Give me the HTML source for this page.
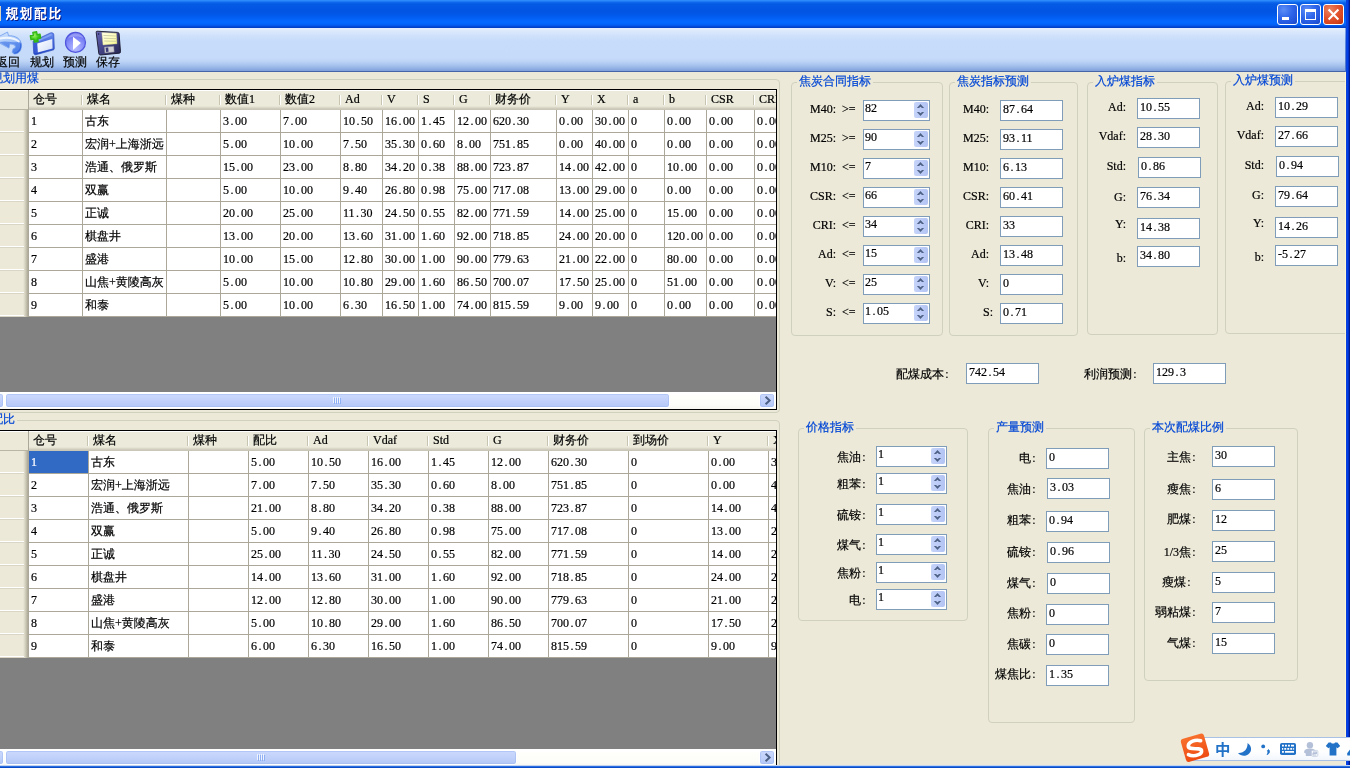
<!DOCTYPE html>
<html lang="zh-CN"><head><meta charset="utf-8"><title>规划配比</title>
<style>
*{box-sizing:border-box;margin:0;padding:0}
html,body{width:1350px;height:768px;overflow:hidden;background:#ece9d8}
body{position:relative;will-change:transform;font-family:"Liberation Serif","WenQuanYi Zen Hei","Noto Sans CJK SC",serif;font-size:12px;line-height:12px;color:#000}
.a{position:absolute}
.t{position:absolute;white-space:nowrap;height:12px;line-height:12px;-webkit-text-stroke:0.2px currentColor}
.r{text-align:right}
.p{display:inline-block;width:6px;text-align:center}
.bl{color:#0046d5;background:#ece9d8}
/* frame */
#title{left:0;top:0;width:1350px;height:28px;background:linear-gradient(to bottom,#3391fc 0,#2683f8 1px,#0d66ec 2.5px,#045ae5 4px,#0254e2 11px,#0259ea 15px,#0463f8 19px,#0468ff 22px,#0365fb 24px,#0355e6 26px,#0140c8 27px,#0140c8 28px)}
#ttxt{left:5.5px;top:7px;-webkit-text-stroke:0;font-family:"Liberation Sans","Noto Sans CJK SC",sans-serif;font-weight:bold;font-size:12.6px;line-height:14px;height:14px;color:#fff;text-shadow:1px 1px 0 #0a1883,0.4px 0 0 #fff;letter-spacing:1.7px}
#rb{left:1346px;top:0;width:4px;height:768px;background:linear-gradient(to right,#0c40d8 0,#0c40d8 1px,#0041ea 1px,#0041ea 2px,#0030c8 2px,#0030c8 3px,#001a90 3px,#001a90 4px)}
#bb{left:0;top:765px;width:1350px;height:3px;background:linear-gradient(to bottom,#c4d4f0 0,#c4d4f0 1px,#2a6fe2 1px,#2a6fe2 2px,#0c4cc6 2px,#0c4cc6 3px)}
.cb{top:4px;width:21px;height:21px;border:1px solid #fff;border-radius:3px;background:radial-gradient(circle at 30% 25%,#5c8df6 0,#2f66ea 45%,#2356dc 75%,#1a46c4 100%);overflow:hidden}
.cb.x{background:radial-gradient(circle at 30% 25%,#ec8460 0,#e2542f 45%,#d5411b 75%,#b9300c 100%)}
#tool{left:0;top:28px;width:1345px;height:44px;background:linear-gradient(to bottom,#e7f0fd 0,#dce9fc 3px,#cfe1fb 8px,#c7dcfa 13px,#c6dbf9 30px,#bfd5f6 33px,#a9c4ee 37px,#8eadE2 41px,#7f9fda 43px,#4565a8 43px,#4565a8 44px)}
.tl{top:56px}
/* group boxes */
.g{position:absolute;border:1px solid #d0d0bf;border-radius:4px}
/* text boxes */
.tb{position:absolute;height:21px;background:#fff;border:1px solid #7f9db9}
.sp{position:absolute;height:21px;background:#fff;border:1px solid #7f9db9}
.sb{position:absolute;right:1px;top:1px;width:14px;height:16px;border-radius:2px;background:linear-gradient(to right,#c6d4f9,#bccbf7 55%,#b3c4f3)}
/* grid */
.grid{position:absolute;overflow:hidden;background:#808080;border:1px solid #000;border-left:0}
.hd{position:absolute;top:0;height:20px;background:linear-gradient(to bottom,#fff 0,#fff 1px,#ebeadb 1px,#ebeadb 16px,#e3dfd0 17px,#d6d2c2 18px,#cbc7b8 19px,#cbc7b8 20px)}
.hs{position:absolute;top:5px;width:2px;height:10px;border-left:1px solid #c7c5b2;border-right:1px solid #fff}
.c{position:absolute;height:23px;background:#fff;border-right:1px solid #aca899;border-bottom:1px solid #aca899}
.c .t{top:6px;left:2px}
.hd .t{top:3px;left:4px}
.rh{position:absolute;left:0;width:29px;height:23px;background:linear-gradient(to right,#ece9d8 0,#ece9d8 23px,#e2dfce 24px,#d6d3c2 25px,#c9c6b4 26px,#bab7a5 27px,#aca899 28px,#aca899 29px)}
.rh i{position:absolute;left:0;top:21px;width:24px;height:2px;border-top:1px solid #fff;border-bottom:1px solid #d9d6c6}
.sel{background:#316ac5;color:#fff}
.hsb{position:absolute;left:0;height:17px;background:linear-gradient(to bottom,#fff 0,#fff 2px,#fefefb 4px,#fcfcf8 13px,#f8f7f1 17px)}
.th{position:absolute;top:1px;height:15px;border:1px solid #fff;border-radius:3px;background:linear-gradient(to bottom,#cbd9fc 0,#c3d3fb 5px,#bccdf8 9px,#b4c8f6 13px);box-shadow:inset 0 0 0 1px rgba(160,185,240,.55)}
</style></head>
<body>
<div id="title" class="a"></div>
<div class="a" style="left:0;top:6px;width:1px;height:15px;background:#d8d4c0"></div><div id="ttxt" class="t">规划配比</div>
<div class="a cb" style="left:1277px"><div class="a" style="left:4px;top:12px;width:7px;height:3px;background:#fff"></div></div><div class="a cb" style="left:1300px"><div class="a" style="left:4px;top:4px;width:11px;height:11px;border:1px solid #fff;border-top-width:3px"></div></div><div class="a cb x" style="left:1323px"><svg class="a" style="left:0;top:0" width="19" height="19" viewBox="0 0 19 19"><path d="M4.6 4.6 L14.4 14.4 M14.4 4.6 L4.6 14.4" stroke="#fff" stroke-width="2.1" stroke-linecap="butt" fill="none"/></svg></div>
<div id="tool" class="a"></div>
<svg class="a" style="left:-2px;top:29px" width="128" height="28" viewBox="-2 29 128 28">
<defs>
<linearGradient id="ga" x1="0" y1="0" x2="0.35" y2="1"><stop offset="0" stop-color="#d6e6fe"/><stop offset=".45" stop-color="#b4d0fa"/><stop offset=".8" stop-color="#86b0f5"/><stop offset="1" stop-color="#6a9af0"/></linearGradient>
<linearGradient id="gw" x1="0" y1="0" x2="1" y2="1"><stop offset="0" stop-color="#ffffff"/><stop offset="1" stop-color="#cfdcf8"/></linearGradient>
<linearGradient id="gf" x1="0" y1="0" x2="0" y2="1"><stop offset="0" stop-color="#6a8cf0"/><stop offset="1" stop-color="#2446c4"/></linearGradient>
<radialGradient id="gp" cx=".5" cy=".8" r=".8"><stop offset="0" stop-color="#b6bcff"/><stop offset=".45" stop-color="#9097fb"/><stop offset=".8" stop-color="#7178f2"/><stop offset="1" stop-color="#5a60ea"/></radialGradient>
<radialGradient id="gg" cx=".4" cy=".35" r=".7"><stop offset="0" stop-color="#9cf060"/><stop offset=".6" stop-color="#3fce1c"/><stop offset="1" stop-color="#28a80c"/></radialGradient>
<linearGradient id="gd" x1="0" y1="0" x2="1" y2="1"><stop offset="0" stop-color="#6a6ab6"/><stop offset=".4" stop-color="#4a4a92"/><stop offset="1" stop-color="#26264e"/></linearGradient>
<linearGradient id="gy" x1="0" y1="0" x2="1" y2="1"><stop offset="0" stop-color="#ffffe8"/><stop offset=".5" stop-color="#fdfdc0"/><stop offset="1" stop-color="#f8f88e"/></linearGradient>
</defs>
<!-- back arrow -->
<path d="M-7 39.6 L7.5 32.1 L8.6 35.7 C13.5 35.6 18.2 37.2 20.4 41 C22 44 21.6 49 19.8 51.4 C18.2 53.4 15.4 54.2 13.6 53.8 L12.2 52.3 C12.6 50.6 12.8 49.6 13.2 48.8 C15 48.2 15.8 47.2 15.2 46 C14.4 44.4 11.6 44 9.5 44 L9 48.1 Z" fill="url(#ga)" stroke="#6f9cee" stroke-width=".8" stroke-linejoin="round"/>
<path d="M-1 42 L8.9 47.6 L9.4 43.6 C12 43.4 15 44 15.8 46 C16.4 47.6 15 48.8 13.4 49.2 L12.6 52.2 C15 53.6 18 52.6 19.4 50.8 C21 48.6 21.4 44.6 20 41.6 C17 42.8 10 41.6 5 41.4 Z" fill="#3f74e6" fill-opacity=".62"/>
<path d="M-1 38.6 C5 37.4 13.4 37.2 18.8 41.6" fill="none" stroke="#ffffff" stroke-width="1.9" stroke-opacity=".8" stroke-linecap="round"/>
<path d="M20.7 43.4 C21.5 48.2 19.4 52.6 14.2 53.3" fill="none" stroke="#2f5fd8" stroke-width="1.2" stroke-opacity=".85"/>
<!-- new window -->
<path d="M33.1 41.2 L50.4 32.9 C52.6 32.3 53.7 33.3 53.8 34.8 L54.3 48.3 C54.3 49.3 53.9 49.8 52.9 50.1 L36 54.7 C34.6 54.9 33.8 54.2 33.7 53 Z" fill="url(#gf)" stroke="#2040b8" stroke-width=".6"/>
<path d="M37.3 43.4 L52.2 39.1 L52.6 48.6 L37.7 52.6 Z" fill="url(#gw)"/>
<path d="M34 41.6 L51.4 33.6 L51.8 35.4 L36.6 42.2 Z" fill="#86a6f6" fill-opacity=".85"/>
<path d="M33.9 42.6 L36.9 43 L37.4 52.6 L34.5 53.4 Z" fill="#3a5ad6"/>
<path d="M33.6 32 h3.8 v3 h3 v3.8 h-3 v3 h-3.8 v-3 h-3 v-3.8 h3 Z" fill="url(#gg)" stroke="#34b816" stroke-width="1.4" stroke-linejoin="round" transform="rotate(-9 35.5 36.9)"/>
<!-- play -->
<circle cx="75.5" cy="42.4" r="10" fill="url(#gp)" stroke="#4f55dc" stroke-width="1.2"/>
<path d="M68 38.5 C69.5 34.8 73 33.2 76 33.2 C79.6 33.2 82.6 35.2 83.8 38.4 C80 36 72 36 68 38.5 Z" fill="#ffffff" fill-opacity=".28"/>
<path d="M73 36.8 L80.9 43 L73 50 Z" fill="#ffffff"/>
<!-- floppy -->
<path d="M97 31.2 L117.6 32.4 C118.6 32.5 119 33 119.1 33.8 L120.5 51.6 C120.6 52.6 120.2 53.1 119.2 53.2 L100.6 55 C99.6 55.1 99 54.6 98.8 53.6 L96.2 32.4 C96.1 31.6 96.4 31.2 97 31.2 Z" fill="url(#gd)" stroke="#17172c" stroke-width=".9"/>
<path d="M101.8 32.4 L116.4 33.3 L117 43.8 L103 45 Z" fill="url(#gy)" stroke="#c8c888" stroke-width=".4"/>
<path d="M103.4 35.4 L115.8 36 M103.8 38.2 L116 38.7 M104.2 41 L116.2 41.3" stroke="#c4c4a0" stroke-width=".8" fill="none"/>
<path d="M104.2 47 L113.8 46.2 L114.2 52 L104.9 53 Z" fill="#d0d0d4" stroke="#77778c" stroke-width=".5"/>
<path d="M105.6 47.8 L108.2 47.6 L108.6 51.8 L106.1 52.1 Z" fill="#3c3c78"/>
<circle cx="98.6" cy="34" r=".8" fill="#1c1c44"/>
</svg>

<div class="t" style="left:-4px;top:56px;">返回</div><div class="t" style="left:30px;top:56px;">规划</div><div class="t" style="left:63px;top:56px;">预测</div><div class="t" style="left:96px;top:56px;">保存</div>
<div class="g" style="left:-20px;top:79px;width:800px;height:334px"></div><div class="t bl" style="left:-10px;top:72px;padding:0 2px 0 1px">规划用煤</div><div class="grid" style="left:0;top:89px;width:777px;height:321px"><div class="a" style="left:0;top:0;width:28px;height:20px;background:linear-gradient(to bottom,#fff 0,#fff 1px,#ece9d8 1px,#ece9d8 19px,#b9b6a4 19px,#b9b6a4 20px)"></div><div class="a" style="left:28px;top:0;width:1px;height:20px;background:#aca899"></div><div class="hd" style="left:29px;width:54px"><div class="t" style="left:4px;top:3px;">仓号</div><div class="hs" style="left:52px"></div></div><div class="hd" style="left:83px;width:84px"><div class="t" style="left:4px;top:3px;">煤名</div><div class="hs" style="left:82px"></div></div><div class="hd" style="left:167px;width:54px"><div class="t" style="left:4px;top:3px;">煤种</div><div class="hs" style="left:52px"></div></div><div class="hd" style="left:221px;width:60px"><div class="t" style="left:4px;top:3px;">数值1</div><div class="hs" style="left:58px"></div></div><div class="hd" style="left:281px;width:60px"><div class="t" style="left:4px;top:3px;">数值2</div><div class="hs" style="left:58px"></div></div><div class="hd" style="left:341px;width:42px"><div class="t" style="left:4px;top:3px;">Ad</div><div class="hs" style="left:40px"></div></div><div class="hd" style="left:383px;width:36px"><div class="t" style="left:4px;top:3px;">V</div><div class="hs" style="left:34px"></div></div><div class="hd" style="left:419px;width:36px"><div class="t" style="left:4px;top:3px;">S</div><div class="hs" style="left:34px"></div></div><div class="hd" style="left:455px;width:36px"><div class="t" style="left:4px;top:3px;">G</div><div class="hs" style="left:34px"></div></div><div class="hd" style="left:491px;width:66px"><div class="t" style="left:4px;top:3px;">财务价</div><div class="hs" style="left:64px"></div></div><div class="hd" style="left:557px;width:36px"><div class="t" style="left:4px;top:3px;">Y</div><div class="hs" style="left:34px"></div></div><div class="hd" style="left:593px;width:36px"><div class="t" style="left:4px;top:3px;">X</div><div class="hs" style="left:34px"></div></div><div class="hd" style="left:629px;width:36px"><div class="t" style="left:4px;top:3px;">a</div><div class="hs" style="left:34px"></div></div><div class="hd" style="left:665px;width:42px"><div class="t" style="left:4px;top:3px;">b</div><div class="hs" style="left:40px"></div></div><div class="hd" style="left:707px;width:48px"><div class="t" style="left:4px;top:3px;">CSR</div><div class="hs" style="left:46px"></div></div><div class="hd" style="left:755px;width:48px"><div class="t" style="left:4px;top:3px;">CRI</div><div class="hs" style="left:46px"></div></div><div class="rh" style="top:20px"><i></i></div><div class="c" style="left:29px;top:20px;width:54px"><div class="t" style="left:2px;top:5px;">1</div></div><div class="c" style="left:83px;top:20px;width:84px"><div class="t" style="left:2px;top:5px;">古东</div></div><div class="c" style="left:167px;top:20px;width:54px"></div><div class="c" style="left:221px;top:20px;width:60px"><div class="t" style="left:2px;top:5px;">3<span class="p">.</span>00</div></div><div class="c" style="left:281px;top:20px;width:60px"><div class="t" style="left:2px;top:5px;">7<span class="p">.</span>00</div></div><div class="c" style="left:341px;top:20px;width:42px"><div class="t" style="left:2px;top:5px;">10<span class="p">.</span>50</div></div><div class="c" style="left:383px;top:20px;width:36px"><div class="t" style="left:2px;top:5px;">16<span class="p">.</span>00</div></div><div class="c" style="left:419px;top:20px;width:36px"><div class="t" style="left:2px;top:5px;">1<span class="p">.</span>45</div></div><div class="c" style="left:455px;top:20px;width:36px"><div class="t" style="left:2px;top:5px;">12<span class="p">.</span>00</div></div><div class="c" style="left:491px;top:20px;width:66px"><div class="t" style="left:2px;top:5px;">620<span class="p">.</span>30</div></div><div class="c" style="left:557px;top:20px;width:36px"><div class="t" style="left:2px;top:5px;">0<span class="p">.</span>00</div></div><div class="c" style="left:593px;top:20px;width:36px"><div class="t" style="left:2px;top:5px;">30<span class="p">.</span>00</div></div><div class="c" style="left:629px;top:20px;width:36px"><div class="t" style="left:2px;top:5px;">0</div></div><div class="c" style="left:665px;top:20px;width:42px"><div class="t" style="left:2px;top:5px;">0<span class="p">.</span>00</div></div><div class="c" style="left:707px;top:20px;width:48px"><div class="t" style="left:2px;top:5px;">0<span class="p">.</span>00</div></div><div class="c" style="left:755px;top:20px;width:48px"><div class="t" style="left:2px;top:5px;">0<span class="p">.</span>00</div></div><div class="rh" style="top:43px"><i></i></div><div class="c" style="left:29px;top:43px;width:54px"><div class="t" style="left:2px;top:5px;">2</div></div><div class="c" style="left:83px;top:43px;width:84px"><div class="t" style="left:2px;top:5px;">宏润+上海浙远</div></div><div class="c" style="left:167px;top:43px;width:54px"></div><div class="c" style="left:221px;top:43px;width:60px"><div class="t" style="left:2px;top:5px;">5<span class="p">.</span>00</div></div><div class="c" style="left:281px;top:43px;width:60px"><div class="t" style="left:2px;top:5px;">10<span class="p">.</span>00</div></div><div class="c" style="left:341px;top:43px;width:42px"><div class="t" style="left:2px;top:5px;">7<span class="p">.</span>50</div></div><div class="c" style="left:383px;top:43px;width:36px"><div class="t" style="left:2px;top:5px;">35<span class="p">.</span>30</div></div><div class="c" style="left:419px;top:43px;width:36px"><div class="t" style="left:2px;top:5px;">0<span class="p">.</span>60</div></div><div class="c" style="left:455px;top:43px;width:36px"><div class="t" style="left:2px;top:5px;">8<span class="p">.</span>00</div></div><div class="c" style="left:491px;top:43px;width:66px"><div class="t" style="left:2px;top:5px;">751<span class="p">.</span>85</div></div><div class="c" style="left:557px;top:43px;width:36px"><div class="t" style="left:2px;top:5px;">0<span class="p">.</span>00</div></div><div class="c" style="left:593px;top:43px;width:36px"><div class="t" style="left:2px;top:5px;">40<span class="p">.</span>00</div></div><div class="c" style="left:629px;top:43px;width:36px"><div class="t" style="left:2px;top:5px;">0</div></div><div class="c" style="left:665px;top:43px;width:42px"><div class="t" style="left:2px;top:5px;">0<span class="p">.</span>00</div></div><div class="c" style="left:707px;top:43px;width:48px"><div class="t" style="left:2px;top:5px;">0<span class="p">.</span>00</div></div><div class="c" style="left:755px;top:43px;width:48px"><div class="t" style="left:2px;top:5px;">0<span class="p">.</span>00</div></div><div class="rh" style="top:66px"><i></i></div><div class="c" style="left:29px;top:66px;width:54px"><div class="t" style="left:2px;top:5px;">3</div></div><div class="c" style="left:83px;top:66px;width:84px"><div class="t" style="left:2px;top:5px;">浩通、俄罗斯</div></div><div class="c" style="left:167px;top:66px;width:54px"></div><div class="c" style="left:221px;top:66px;width:60px"><div class="t" style="left:2px;top:5px;">15<span class="p">.</span>00</div></div><div class="c" style="left:281px;top:66px;width:60px"><div class="t" style="left:2px;top:5px;">23<span class="p">.</span>00</div></div><div class="c" style="left:341px;top:66px;width:42px"><div class="t" style="left:2px;top:5px;">8<span class="p">.</span>80</div></div><div class="c" style="left:383px;top:66px;width:36px"><div class="t" style="left:2px;top:5px;">34<span class="p">.</span>20</div></div><div class="c" style="left:419px;top:66px;width:36px"><div class="t" style="left:2px;top:5px;">0<span class="p">.</span>38</div></div><div class="c" style="left:455px;top:66px;width:36px"><div class="t" style="left:2px;top:5px;">88<span class="p">.</span>00</div></div><div class="c" style="left:491px;top:66px;width:66px"><div class="t" style="left:2px;top:5px;">723<span class="p">.</span>87</div></div><div class="c" style="left:557px;top:66px;width:36px"><div class="t" style="left:2px;top:5px;">14<span class="p">.</span>00</div></div><div class="c" style="left:593px;top:66px;width:36px"><div class="t" style="left:2px;top:5px;">42<span class="p">.</span>00</div></div><div class="c" style="left:629px;top:66px;width:36px"><div class="t" style="left:2px;top:5px;">0</div></div><div class="c" style="left:665px;top:66px;width:42px"><div class="t" style="left:2px;top:5px;">10<span class="p">.</span>00</div></div><div class="c" style="left:707px;top:66px;width:48px"><div class="t" style="left:2px;top:5px;">0<span class="p">.</span>00</div></div><div class="c" style="left:755px;top:66px;width:48px"><div class="t" style="left:2px;top:5px;">0<span class="p">.</span>00</div></div><div class="rh" style="top:89px"><i></i></div><div class="c" style="left:29px;top:89px;width:54px"><div class="t" style="left:2px;top:5px;">4</div></div><div class="c" style="left:83px;top:89px;width:84px"><div class="t" style="left:2px;top:5px;">双赢</div></div><div class="c" style="left:167px;top:89px;width:54px"></div><div class="c" style="left:221px;top:89px;width:60px"><div class="t" style="left:2px;top:5px;">5<span class="p">.</span>00</div></div><div class="c" style="left:281px;top:89px;width:60px"><div class="t" style="left:2px;top:5px;">10<span class="p">.</span>00</div></div><div class="c" style="left:341px;top:89px;width:42px"><div class="t" style="left:2px;top:5px;">9<span class="p">.</span>40</div></div><div class="c" style="left:383px;top:89px;width:36px"><div class="t" style="left:2px;top:5px;">26<span class="p">.</span>80</div></div><div class="c" style="left:419px;top:89px;width:36px"><div class="t" style="left:2px;top:5px;">0<span class="p">.</span>98</div></div><div class="c" style="left:455px;top:89px;width:36px"><div class="t" style="left:2px;top:5px;">75<span class="p">.</span>00</div></div><div class="c" style="left:491px;top:89px;width:66px"><div class="t" style="left:2px;top:5px;">717<span class="p">.</span>08</div></div><div class="c" style="left:557px;top:89px;width:36px"><div class="t" style="left:2px;top:5px;">13<span class="p">.</span>00</div></div><div class="c" style="left:593px;top:89px;width:36px"><div class="t" style="left:2px;top:5px;">29<span class="p">.</span>00</div></div><div class="c" style="left:629px;top:89px;width:36px"><div class="t" style="left:2px;top:5px;">0</div></div><div class="c" style="left:665px;top:89px;width:42px"><div class="t" style="left:2px;top:5px;">0<span class="p">.</span>00</div></div><div class="c" style="left:707px;top:89px;width:48px"><div class="t" style="left:2px;top:5px;">0<span class="p">.</span>00</div></div><div class="c" style="left:755px;top:89px;width:48px"><div class="t" style="left:2px;top:5px;">0<span class="p">.</span>00</div></div><div class="rh" style="top:112px"><i></i></div><div class="c" style="left:29px;top:112px;width:54px"><div class="t" style="left:2px;top:5px;">5</div></div><div class="c" style="left:83px;top:112px;width:84px"><div class="t" style="left:2px;top:5px;">正诚</div></div><div class="c" style="left:167px;top:112px;width:54px"></div><div class="c" style="left:221px;top:112px;width:60px"><div class="t" style="left:2px;top:5px;">20<span class="p">.</span>00</div></div><div class="c" style="left:281px;top:112px;width:60px"><div class="t" style="left:2px;top:5px;">25<span class="p">.</span>00</div></div><div class="c" style="left:341px;top:112px;width:42px"><div class="t" style="left:2px;top:5px;">11<span class="p">.</span>30</div></div><div class="c" style="left:383px;top:112px;width:36px"><div class="t" style="left:2px;top:5px;">24<span class="p">.</span>50</div></div><div class="c" style="left:419px;top:112px;width:36px"><div class="t" style="left:2px;top:5px;">0<span class="p">.</span>55</div></div><div class="c" style="left:455px;top:112px;width:36px"><div class="t" style="left:2px;top:5px;">82<span class="p">.</span>00</div></div><div class="c" style="left:491px;top:112px;width:66px"><div class="t" style="left:2px;top:5px;">771<span class="p">.</span>59</div></div><div class="c" style="left:557px;top:112px;width:36px"><div class="t" style="left:2px;top:5px;">14<span class="p">.</span>00</div></div><div class="c" style="left:593px;top:112px;width:36px"><div class="t" style="left:2px;top:5px;">25<span class="p">.</span>00</div></div><div class="c" style="left:629px;top:112px;width:36px"><div class="t" style="left:2px;top:5px;">0</div></div><div class="c" style="left:665px;top:112px;width:42px"><div class="t" style="left:2px;top:5px;">15<span class="p">.</span>00</div></div><div class="c" style="left:707px;top:112px;width:48px"><div class="t" style="left:2px;top:5px;">0<span class="p">.</span>00</div></div><div class="c" style="left:755px;top:112px;width:48px"><div class="t" style="left:2px;top:5px;">0<span class="p">.</span>00</div></div><div class="rh" style="top:135px"><i></i></div><div class="c" style="left:29px;top:135px;width:54px"><div class="t" style="left:2px;top:5px;">6</div></div><div class="c" style="left:83px;top:135px;width:84px"><div class="t" style="left:2px;top:5px;">棋盘井</div></div><div class="c" style="left:167px;top:135px;width:54px"></div><div class="c" style="left:221px;top:135px;width:60px"><div class="t" style="left:2px;top:5px;">13<span class="p">.</span>00</div></div><div class="c" style="left:281px;top:135px;width:60px"><div class="t" style="left:2px;top:5px;">20<span class="p">.</span>00</div></div><div class="c" style="left:341px;top:135px;width:42px"><div class="t" style="left:2px;top:5px;">13<span class="p">.</span>60</div></div><div class="c" style="left:383px;top:135px;width:36px"><div class="t" style="left:2px;top:5px;">31<span class="p">.</span>00</div></div><div class="c" style="left:419px;top:135px;width:36px"><div class="t" style="left:2px;top:5px;">1<span class="p">.</span>60</div></div><div class="c" style="left:455px;top:135px;width:36px"><div class="t" style="left:2px;top:5px;">92<span class="p">.</span>00</div></div><div class="c" style="left:491px;top:135px;width:66px"><div class="t" style="left:2px;top:5px;">718<span class="p">.</span>85</div></div><div class="c" style="left:557px;top:135px;width:36px"><div class="t" style="left:2px;top:5px;">24<span class="p">.</span>00</div></div><div class="c" style="left:593px;top:135px;width:36px"><div class="t" style="left:2px;top:5px;">20<span class="p">.</span>00</div></div><div class="c" style="left:629px;top:135px;width:36px"><div class="t" style="left:2px;top:5px;">0</div></div><div class="c" style="left:665px;top:135px;width:42px"><div class="t" style="left:2px;top:5px;">120<span class="p">.</span>00</div></div><div class="c" style="left:707px;top:135px;width:48px"><div class="t" style="left:2px;top:5px;">0<span class="p">.</span>00</div></div><div class="c" style="left:755px;top:135px;width:48px"><div class="t" style="left:2px;top:5px;">0<span class="p">.</span>00</div></div><div class="rh" style="top:158px"><i></i></div><div class="c" style="left:29px;top:158px;width:54px"><div class="t" style="left:2px;top:5px;">7</div></div><div class="c" style="left:83px;top:158px;width:84px"><div class="t" style="left:2px;top:5px;">盛港</div></div><div class="c" style="left:167px;top:158px;width:54px"></div><div class="c" style="left:221px;top:158px;width:60px"><div class="t" style="left:2px;top:5px;">10<span class="p">.</span>00</div></div><div class="c" style="left:281px;top:158px;width:60px"><div class="t" style="left:2px;top:5px;">15<span class="p">.</span>00</div></div><div class="c" style="left:341px;top:158px;width:42px"><div class="t" style="left:2px;top:5px;">12<span class="p">.</span>80</div></div><div class="c" style="left:383px;top:158px;width:36px"><div class="t" style="left:2px;top:5px;">30<span class="p">.</span>00</div></div><div class="c" style="left:419px;top:158px;width:36px"><div class="t" style="left:2px;top:5px;">1<span class="p">.</span>00</div></div><div class="c" style="left:455px;top:158px;width:36px"><div class="t" style="left:2px;top:5px;">90<span class="p">.</span>00</div></div><div class="c" style="left:491px;top:158px;width:66px"><div class="t" style="left:2px;top:5px;">779<span class="p">.</span>63</div></div><div class="c" style="left:557px;top:158px;width:36px"><div class="t" style="left:2px;top:5px;">21<span class="p">.</span>00</div></div><div class="c" style="left:593px;top:158px;width:36px"><div class="t" style="left:2px;top:5px;">22<span class="p">.</span>00</div></div><div class="c" style="left:629px;top:158px;width:36px"><div class="t" style="left:2px;top:5px;">0</div></div><div class="c" style="left:665px;top:158px;width:42px"><div class="t" style="left:2px;top:5px;">80<span class="p">.</span>00</div></div><div class="c" style="left:707px;top:158px;width:48px"><div class="t" style="left:2px;top:5px;">0<span class="p">.</span>00</div></div><div class="c" style="left:755px;top:158px;width:48px"><div class="t" style="left:2px;top:5px;">0<span class="p">.</span>00</div></div><div class="rh" style="top:181px"><i></i></div><div class="c" style="left:29px;top:181px;width:54px"><div class="t" style="left:2px;top:5px;">8</div></div><div class="c" style="left:83px;top:181px;width:84px"><div class="t" style="left:2px;top:5px;">山焦+黄陵高灰</div></div><div class="c" style="left:167px;top:181px;width:54px"></div><div class="c" style="left:221px;top:181px;width:60px"><div class="t" style="left:2px;top:5px;">5<span class="p">.</span>00</div></div><div class="c" style="left:281px;top:181px;width:60px"><div class="t" style="left:2px;top:5px;">10<span class="p">.</span>00</div></div><div class="c" style="left:341px;top:181px;width:42px"><div class="t" style="left:2px;top:5px;">10<span class="p">.</span>80</div></div><div class="c" style="left:383px;top:181px;width:36px"><div class="t" style="left:2px;top:5px;">29<span class="p">.</span>00</div></div><div class="c" style="left:419px;top:181px;width:36px"><div class="t" style="left:2px;top:5px;">1<span class="p">.</span>60</div></div><div class="c" style="left:455px;top:181px;width:36px"><div class="t" style="left:2px;top:5px;">86<span class="p">.</span>50</div></div><div class="c" style="left:491px;top:181px;width:66px"><div class="t" style="left:2px;top:5px;">700<span class="p">.</span>07</div></div><div class="c" style="left:557px;top:181px;width:36px"><div class="t" style="left:2px;top:5px;">17<span class="p">.</span>50</div></div><div class="c" style="left:593px;top:181px;width:36px"><div class="t" style="left:2px;top:5px;">25<span class="p">.</span>00</div></div><div class="c" style="left:629px;top:181px;width:36px"><div class="t" style="left:2px;top:5px;">0</div></div><div class="c" style="left:665px;top:181px;width:42px"><div class="t" style="left:2px;top:5px;">51<span class="p">.</span>00</div></div><div class="c" style="left:707px;top:181px;width:48px"><div class="t" style="left:2px;top:5px;">0<span class="p">.</span>00</div></div><div class="c" style="left:755px;top:181px;width:48px"><div class="t" style="left:2px;top:5px;">0<span class="p">.</span>00</div></div><div class="rh" style="top:204px"><i></i></div><div class="c" style="left:29px;top:204px;width:54px"><div class="t" style="left:2px;top:5px;">9</div></div><div class="c" style="left:83px;top:204px;width:84px"><div class="t" style="left:2px;top:5px;">和泰</div></div><div class="c" style="left:167px;top:204px;width:54px"></div><div class="c" style="left:221px;top:204px;width:60px"><div class="t" style="left:2px;top:5px;">5<span class="p">.</span>00</div></div><div class="c" style="left:281px;top:204px;width:60px"><div class="t" style="left:2px;top:5px;">10<span class="p">.</span>00</div></div><div class="c" style="left:341px;top:204px;width:42px"><div class="t" style="left:2px;top:5px;">6<span class="p">.</span>30</div></div><div class="c" style="left:383px;top:204px;width:36px"><div class="t" style="left:2px;top:5px;">16<span class="p">.</span>50</div></div><div class="c" style="left:419px;top:204px;width:36px"><div class="t" style="left:2px;top:5px;">1<span class="p">.</span>00</div></div><div class="c" style="left:455px;top:204px;width:36px"><div class="t" style="left:2px;top:5px;">74<span class="p">.</span>00</div></div><div class="c" style="left:491px;top:204px;width:66px"><div class="t" style="left:2px;top:5px;">815<span class="p">.</span>59</div></div><div class="c" style="left:557px;top:204px;width:36px"><div class="t" style="left:2px;top:5px;">9<span class="p">.</span>00</div></div><div class="c" style="left:593px;top:204px;width:36px"><div class="t" style="left:2px;top:5px;">9<span class="p">.</span>00</div></div><div class="c" style="left:629px;top:204px;width:36px"><div class="t" style="left:2px;top:5px;">0</div></div><div class="c" style="left:665px;top:204px;width:42px"><div class="t" style="left:2px;top:5px;">0<span class="p">.</span>00</div></div><div class="c" style="left:707px;top:204px;width:48px"><div class="t" style="left:2px;top:5px;">0<span class="p">.</span>00</div></div><div class="c" style="left:755px;top:204px;width:48px"><div class="t" style="left:2px;top:5px;">0<span class="p">.</span>00</div></div><div class="hsb" style="top:302px;width:776px"><div class="th" style="left:-13px;width:17px"></div><div class="th" style="left:5px;width:665px"><div class="a" style="left:327px;top:3px;width:1px;height:6px;background:#eef3fe"></div><div class="a" style="left:328px;top:4px;width:1px;height:6px;background:#8fb0f2"></div><div class="a" style="left:329px;top:3px;width:1px;height:6px;background:#eef3fe"></div><div class="a" style="left:330px;top:4px;width:1px;height:6px;background:#8fb0f2"></div><div class="a" style="left:331px;top:3px;width:1px;height:6px;background:#eef3fe"></div><div class="a" style="left:332px;top:4px;width:1px;height:6px;background:#8fb0f2"></div><div class="a" style="left:333px;top:3px;width:1px;height:6px;background:#eef3fe"></div><div class="a" style="left:334px;top:4px;width:1px;height:6px;background:#8fb0f2"></div></div><div class="th" style="left:759px;width:16px"><svg class="a" style="left:4px;top:2px" width="8" height="9" viewBox="0 0 8 9"><path d="M1.6 0.8 L5.6 4.5 L1.6 8.2" fill="none" stroke="#4d6185" stroke-width="2"/></svg></div></div></div><div class="g" style="left:-20px;top:420px;width:800px;height:400px"></div><div class="t bl" style="left:-10px;top:413px;padding:0 2px 0 1px">配比</div><div class="grid" style="left:0;top:430px;width:777px;height:337px"><div class="a" style="left:0;top:0;width:28px;height:20px;background:linear-gradient(to bottom,#fff 0,#fff 1px,#ece9d8 1px,#ece9d8 19px,#b9b6a4 19px,#b9b6a4 20px)"></div><div class="a" style="left:28px;top:0;width:1px;height:20px;background:#aca899"></div><div class="hd" style="left:29px;width:60px"><div class="t" style="left:4px;top:3px;">仓号</div><div class="hs" style="left:58px"></div></div><div class="hd" style="left:89px;width:100px"><div class="t" style="left:4px;top:3px;">煤名</div><div class="hs" style="left:98px"></div></div><div class="hd" style="left:189px;width:60px"><div class="t" style="left:4px;top:3px;">煤种</div><div class="hs" style="left:58px"></div></div><div class="hd" style="left:249px;width:60px"><div class="t" style="left:4px;top:3px;">配比</div><div class="hs" style="left:58px"></div></div><div class="hd" style="left:309px;width:60px"><div class="t" style="left:4px;top:3px;">Ad</div><div class="hs" style="left:58px"></div></div><div class="hd" style="left:369px;width:60px"><div class="t" style="left:4px;top:3px;">Vdaf</div><div class="hs" style="left:58px"></div></div><div class="hd" style="left:429px;width:60px"><div class="t" style="left:4px;top:3px;">Std</div><div class="hs" style="left:58px"></div></div><div class="hd" style="left:489px;width:60px"><div class="t" style="left:4px;top:3px;">G</div><div class="hs" style="left:58px"></div></div><div class="hd" style="left:549px;width:80px"><div class="t" style="left:4px;top:3px;">财务价</div><div class="hs" style="left:78px"></div></div><div class="hd" style="left:629px;width:80px"><div class="t" style="left:4px;top:3px;">到场价</div><div class="hs" style="left:78px"></div></div><div class="hd" style="left:709px;width:60px"><div class="t" style="left:4px;top:3px;">Y</div><div class="hs" style="left:58px"></div></div><div class="hd" style="left:769px;width:60px"><div class="t" style="left:4px;top:3px;">X</div><div class="hs" style="left:58px"></div></div><div class="rh" style="top:20px"><i></i></div><div class="c sel" style="left:29px;top:20px;width:60px"><div class="t" style="left:2px;top:5px;">1</div></div><div class="c" style="left:89px;top:20px;width:100px"><div class="t" style="left:2px;top:5px;">古东</div></div><div class="c" style="left:189px;top:20px;width:60px"></div><div class="c" style="left:249px;top:20px;width:60px"><div class="t" style="left:2px;top:5px;">5<span class="p">.</span>00</div></div><div class="c" style="left:309px;top:20px;width:60px"><div class="t" style="left:2px;top:5px;">10<span class="p">.</span>50</div></div><div class="c" style="left:369px;top:20px;width:60px"><div class="t" style="left:2px;top:5px;">16<span class="p">.</span>00</div></div><div class="c" style="left:429px;top:20px;width:60px"><div class="t" style="left:2px;top:5px;">1<span class="p">.</span>45</div></div><div class="c" style="left:489px;top:20px;width:60px"><div class="t" style="left:2px;top:5px;">12<span class="p">.</span>00</div></div><div class="c" style="left:549px;top:20px;width:80px"><div class="t" style="left:2px;top:5px;">620<span class="p">.</span>30</div></div><div class="c" style="left:629px;top:20px;width:80px"><div class="t" style="left:2px;top:5px;">0</div></div><div class="c" style="left:709px;top:20px;width:60px"><div class="t" style="left:2px;top:5px;">0<span class="p">.</span>00</div></div><div class="c" style="left:769px;top:20px;width:60px"><div class="t" style="left:2px;top:5px;">30<span class="p">.</span>00</div></div><div class="rh" style="top:43px"><i></i></div><div class="c" style="left:29px;top:43px;width:60px"><div class="t" style="left:2px;top:5px;">2</div></div><div class="c" style="left:89px;top:43px;width:100px"><div class="t" style="left:2px;top:5px;">宏润+上海浙远</div></div><div class="c" style="left:189px;top:43px;width:60px"></div><div class="c" style="left:249px;top:43px;width:60px"><div class="t" style="left:2px;top:5px;">7<span class="p">.</span>00</div></div><div class="c" style="left:309px;top:43px;width:60px"><div class="t" style="left:2px;top:5px;">7<span class="p">.</span>50</div></div><div class="c" style="left:369px;top:43px;width:60px"><div class="t" style="left:2px;top:5px;">35<span class="p">.</span>30</div></div><div class="c" style="left:429px;top:43px;width:60px"><div class="t" style="left:2px;top:5px;">0<span class="p">.</span>60</div></div><div class="c" style="left:489px;top:43px;width:60px"><div class="t" style="left:2px;top:5px;">8<span class="p">.</span>00</div></div><div class="c" style="left:549px;top:43px;width:80px"><div class="t" style="left:2px;top:5px;">751<span class="p">.</span>85</div></div><div class="c" style="left:629px;top:43px;width:80px"><div class="t" style="left:2px;top:5px;">0</div></div><div class="c" style="left:709px;top:43px;width:60px"><div class="t" style="left:2px;top:5px;">0<span class="p">.</span>00</div></div><div class="c" style="left:769px;top:43px;width:60px"><div class="t" style="left:2px;top:5px;">40<span class="p">.</span>00</div></div><div class="rh" style="top:66px"><i></i></div><div class="c" style="left:29px;top:66px;width:60px"><div class="t" style="left:2px;top:5px;">3</div></div><div class="c" style="left:89px;top:66px;width:100px"><div class="t" style="left:2px;top:5px;">浩通、俄罗斯</div></div><div class="c" style="left:189px;top:66px;width:60px"></div><div class="c" style="left:249px;top:66px;width:60px"><div class="t" style="left:2px;top:5px;">21<span class="p">.</span>00</div></div><div class="c" style="left:309px;top:66px;width:60px"><div class="t" style="left:2px;top:5px;">8<span class="p">.</span>80</div></div><div class="c" style="left:369px;top:66px;width:60px"><div class="t" style="left:2px;top:5px;">34<span class="p">.</span>20</div></div><div class="c" style="left:429px;top:66px;width:60px"><div class="t" style="left:2px;top:5px;">0<span class="p">.</span>38</div></div><div class="c" style="left:489px;top:66px;width:60px"><div class="t" style="left:2px;top:5px;">88<span class="p">.</span>00</div></div><div class="c" style="left:549px;top:66px;width:80px"><div class="t" style="left:2px;top:5px;">723<span class="p">.</span>87</div></div><div class="c" style="left:629px;top:66px;width:80px"><div class="t" style="left:2px;top:5px;">0</div></div><div class="c" style="left:709px;top:66px;width:60px"><div class="t" style="left:2px;top:5px;">14<span class="p">.</span>00</div></div><div class="c" style="left:769px;top:66px;width:60px"><div class="t" style="left:2px;top:5px;">42<span class="p">.</span>00</div></div><div class="rh" style="top:89px"><i></i></div><div class="c" style="left:29px;top:89px;width:60px"><div class="t" style="left:2px;top:5px;">4</div></div><div class="c" style="left:89px;top:89px;width:100px"><div class="t" style="left:2px;top:5px;">双赢</div></div><div class="c" style="left:189px;top:89px;width:60px"></div><div class="c" style="left:249px;top:89px;width:60px"><div class="t" style="left:2px;top:5px;">5<span class="p">.</span>00</div></div><div class="c" style="left:309px;top:89px;width:60px"><div class="t" style="left:2px;top:5px;">9<span class="p">.</span>40</div></div><div class="c" style="left:369px;top:89px;width:60px"><div class="t" style="left:2px;top:5px;">26<span class="p">.</span>80</div></div><div class="c" style="left:429px;top:89px;width:60px"><div class="t" style="left:2px;top:5px;">0<span class="p">.</span>98</div></div><div class="c" style="left:489px;top:89px;width:60px"><div class="t" style="left:2px;top:5px;">75<span class="p">.</span>00</div></div><div class="c" style="left:549px;top:89px;width:80px"><div class="t" style="left:2px;top:5px;">717<span class="p">.</span>08</div></div><div class="c" style="left:629px;top:89px;width:80px"><div class="t" style="left:2px;top:5px;">0</div></div><div class="c" style="left:709px;top:89px;width:60px"><div class="t" style="left:2px;top:5px;">13<span class="p">.</span>00</div></div><div class="c" style="left:769px;top:89px;width:60px"><div class="t" style="left:2px;top:5px;">29<span class="p">.</span>00</div></div><div class="rh" style="top:112px"><i></i></div><div class="c" style="left:29px;top:112px;width:60px"><div class="t" style="left:2px;top:5px;">5</div></div><div class="c" style="left:89px;top:112px;width:100px"><div class="t" style="left:2px;top:5px;">正诚</div></div><div class="c" style="left:189px;top:112px;width:60px"></div><div class="c" style="left:249px;top:112px;width:60px"><div class="t" style="left:2px;top:5px;">25<span class="p">.</span>00</div></div><div class="c" style="left:309px;top:112px;width:60px"><div class="t" style="left:2px;top:5px;">11<span class="p">.</span>30</div></div><div class="c" style="left:369px;top:112px;width:60px"><div class="t" style="left:2px;top:5px;">24<span class="p">.</span>50</div></div><div class="c" style="left:429px;top:112px;width:60px"><div class="t" style="left:2px;top:5px;">0<span class="p">.</span>55</div></div><div class="c" style="left:489px;top:112px;width:60px"><div class="t" style="left:2px;top:5px;">82<span class="p">.</span>00</div></div><div class="c" style="left:549px;top:112px;width:80px"><div class="t" style="left:2px;top:5px;">771<span class="p">.</span>59</div></div><div class="c" style="left:629px;top:112px;width:80px"><div class="t" style="left:2px;top:5px;">0</div></div><div class="c" style="left:709px;top:112px;width:60px"><div class="t" style="left:2px;top:5px;">14<span class="p">.</span>00</div></div><div class="c" style="left:769px;top:112px;width:60px"><div class="t" style="left:2px;top:5px;">25<span class="p">.</span>00</div></div><div class="rh" style="top:135px"><i></i></div><div class="c" style="left:29px;top:135px;width:60px"><div class="t" style="left:2px;top:5px;">6</div></div><div class="c" style="left:89px;top:135px;width:100px"><div class="t" style="left:2px;top:5px;">棋盘井</div></div><div class="c" style="left:189px;top:135px;width:60px"></div><div class="c" style="left:249px;top:135px;width:60px"><div class="t" style="left:2px;top:5px;">14<span class="p">.</span>00</div></div><div class="c" style="left:309px;top:135px;width:60px"><div class="t" style="left:2px;top:5px;">13<span class="p">.</span>60</div></div><div class="c" style="left:369px;top:135px;width:60px"><div class="t" style="left:2px;top:5px;">31<span class="p">.</span>00</div></div><div class="c" style="left:429px;top:135px;width:60px"><div class="t" style="left:2px;top:5px;">1<span class="p">.</span>60</div></div><div class="c" style="left:489px;top:135px;width:60px"><div class="t" style="left:2px;top:5px;">92<span class="p">.</span>00</div></div><div class="c" style="left:549px;top:135px;width:80px"><div class="t" style="left:2px;top:5px;">718<span class="p">.</span>85</div></div><div class="c" style="left:629px;top:135px;width:80px"><div class="t" style="left:2px;top:5px;">0</div></div><div class="c" style="left:709px;top:135px;width:60px"><div class="t" style="left:2px;top:5px;">24<span class="p">.</span>00</div></div><div class="c" style="left:769px;top:135px;width:60px"><div class="t" style="left:2px;top:5px;">20<span class="p">.</span>00</div></div><div class="rh" style="top:158px"><i></i></div><div class="c" style="left:29px;top:158px;width:60px"><div class="t" style="left:2px;top:5px;">7</div></div><div class="c" style="left:89px;top:158px;width:100px"><div class="t" style="left:2px;top:5px;">盛港</div></div><div class="c" style="left:189px;top:158px;width:60px"></div><div class="c" style="left:249px;top:158px;width:60px"><div class="t" style="left:2px;top:5px;">12<span class="p">.</span>00</div></div><div class="c" style="left:309px;top:158px;width:60px"><div class="t" style="left:2px;top:5px;">12<span class="p">.</span>80</div></div><div class="c" style="left:369px;top:158px;width:60px"><div class="t" style="left:2px;top:5px;">30<span class="p">.</span>00</div></div><div class="c" style="left:429px;top:158px;width:60px"><div class="t" style="left:2px;top:5px;">1<span class="p">.</span>00</div></div><div class="c" style="left:489px;top:158px;width:60px"><div class="t" style="left:2px;top:5px;">90<span class="p">.</span>00</div></div><div class="c" style="left:549px;top:158px;width:80px"><div class="t" style="left:2px;top:5px;">779<span class="p">.</span>63</div></div><div class="c" style="left:629px;top:158px;width:80px"><div class="t" style="left:2px;top:5px;">0</div></div><div class="c" style="left:709px;top:158px;width:60px"><div class="t" style="left:2px;top:5px;">21<span class="p">.</span>00</div></div><div class="c" style="left:769px;top:158px;width:60px"><div class="t" style="left:2px;top:5px;">22<span class="p">.</span>00</div></div><div class="rh" style="top:181px"><i></i></div><div class="c" style="left:29px;top:181px;width:60px"><div class="t" style="left:2px;top:5px;">8</div></div><div class="c" style="left:89px;top:181px;width:100px"><div class="t" style="left:2px;top:5px;">山焦+黄陵高灰</div></div><div class="c" style="left:189px;top:181px;width:60px"></div><div class="c" style="left:249px;top:181px;width:60px"><div class="t" style="left:2px;top:5px;">5<span class="p">.</span>00</div></div><div class="c" style="left:309px;top:181px;width:60px"><div class="t" style="left:2px;top:5px;">10<span class="p">.</span>80</div></div><div class="c" style="left:369px;top:181px;width:60px"><div class="t" style="left:2px;top:5px;">29<span class="p">.</span>00</div></div><div class="c" style="left:429px;top:181px;width:60px"><div class="t" style="left:2px;top:5px;">1<span class="p">.</span>60</div></div><div class="c" style="left:489px;top:181px;width:60px"><div class="t" style="left:2px;top:5px;">86<span class="p">.</span>50</div></div><div class="c" style="left:549px;top:181px;width:80px"><div class="t" style="left:2px;top:5px;">700<span class="p">.</span>07</div></div><div class="c" style="left:629px;top:181px;width:80px"><div class="t" style="left:2px;top:5px;">0</div></div><div class="c" style="left:709px;top:181px;width:60px"><div class="t" style="left:2px;top:5px;">17<span class="p">.</span>50</div></div><div class="c" style="left:769px;top:181px;width:60px"><div class="t" style="left:2px;top:5px;">25<span class="p">.</span>00</div></div><div class="rh" style="top:204px"><i></i></div><div class="c" style="left:29px;top:204px;width:60px"><div class="t" style="left:2px;top:5px;">9</div></div><div class="c" style="left:89px;top:204px;width:100px"><div class="t" style="left:2px;top:5px;">和泰</div></div><div class="c" style="left:189px;top:204px;width:60px"></div><div class="c" style="left:249px;top:204px;width:60px"><div class="t" style="left:2px;top:5px;">6<span class="p">.</span>00</div></div><div class="c" style="left:309px;top:204px;width:60px"><div class="t" style="left:2px;top:5px;">6<span class="p">.</span>30</div></div><div class="c" style="left:369px;top:204px;width:60px"><div class="t" style="left:2px;top:5px;">16<span class="p">.</span>50</div></div><div class="c" style="left:429px;top:204px;width:60px"><div class="t" style="left:2px;top:5px;">1<span class="p">.</span>00</div></div><div class="c" style="left:489px;top:204px;width:60px"><div class="t" style="left:2px;top:5px;">74<span class="p">.</span>00</div></div><div class="c" style="left:549px;top:204px;width:80px"><div class="t" style="left:2px;top:5px;">815<span class="p">.</span>59</div></div><div class="c" style="left:629px;top:204px;width:80px"><div class="t" style="left:2px;top:5px;">0</div></div><div class="c" style="left:709px;top:204px;width:60px"><div class="t" style="left:2px;top:5px;">9<span class="p">.</span>00</div></div><div class="c" style="left:769px;top:204px;width:60px"><div class="t" style="left:2px;top:5px;">9<span class="p">.</span>00</div></div><div class="hsb" style="top:318px;width:776px"><div class="th" style="left:-13px;width:17px"></div><div class="th" style="left:5px;width:512px"><div class="a" style="left:251px;top:3px;width:1px;height:6px;background:#eef3fe"></div><div class="a" style="left:252px;top:4px;width:1px;height:6px;background:#8fb0f2"></div><div class="a" style="left:253px;top:3px;width:1px;height:6px;background:#eef3fe"></div><div class="a" style="left:254px;top:4px;width:1px;height:6px;background:#8fb0f2"></div><div class="a" style="left:255px;top:3px;width:1px;height:6px;background:#eef3fe"></div><div class="a" style="left:256px;top:4px;width:1px;height:6px;background:#8fb0f2"></div><div class="a" style="left:257px;top:3px;width:1px;height:6px;background:#eef3fe"></div><div class="a" style="left:258px;top:4px;width:1px;height:6px;background:#8fb0f2"></div></div><div class="th" style="left:759px;width:16px"><svg class="a" style="left:4px;top:2px" width="8" height="9" viewBox="0 0 8 9"><path d="M1.6 0.8 L5.6 4.5 L1.6 8.2" fill="none" stroke="#4d6185" stroke-width="2"/></svg></div></div></div>
<div class="g" style="left:791px;top:82px;width:152px;height:254px"></div><div class="t bl" style="left:797px;top:75px;padding:0 2px">焦炭合同指标</div><div class="t r" style="right:514px;top:103px">M40:</div><div class="t" style="left:842px;top:103px;">&gt;=</div><div class="sp" style="left:863px;top:100px;width:67px"><div class="t" style="left:1px;top:1px;">82</div><div class="sb"><svg class="a" style="left:0;top:0" width="14" height="16" viewBox="0 0 14 16"><path d="M2.9 6 L6.5 2.1 L10.1 6 L8 6 L6.5 4.7 L5 6 Z M2.9 10 L6.5 13.9 L10.1 10 L8 10 L6.5 11.3 L5 10 Z" fill="#4d6185"/></svg></div></div><div class="t r" style="right:514px;top:132px">M25:</div><div class="t" style="left:842px;top:132px;">&gt;=</div><div class="sp" style="left:863px;top:129px;width:67px"><div class="t" style="left:1px;top:1px;">90</div><div class="sb"><svg class="a" style="left:0;top:0" width="14" height="16" viewBox="0 0 14 16"><path d="M2.9 6 L6.5 2.1 L10.1 6 L8 6 L6.5 4.7 L5 6 Z M2.9 10 L6.5 13.9 L10.1 10 L8 10 L6.5 11.3 L5 10 Z" fill="#4d6185"/></svg></div></div><div class="t r" style="right:514px;top:161px">M10:</div><div class="t" style="left:842px;top:161px;">&lt;=</div><div class="sp" style="left:863px;top:158px;width:67px"><div class="t" style="left:1px;top:1px;">7</div><div class="sb"><svg class="a" style="left:0;top:0" width="14" height="16" viewBox="0 0 14 16"><path d="M2.9 6 L6.5 2.1 L10.1 6 L8 6 L6.5 4.7 L5 6 Z M2.9 10 L6.5 13.9 L10.1 10 L8 10 L6.5 11.3 L5 10 Z" fill="#4d6185"/></svg></div></div><div class="t r" style="right:514px;top:190px">CSR:</div><div class="t" style="left:842px;top:190px;">&lt;=</div><div class="sp" style="left:863px;top:187px;width:67px"><div class="t" style="left:1px;top:1px;">66</div><div class="sb"><svg class="a" style="left:0;top:0" width="14" height="16" viewBox="0 0 14 16"><path d="M2.9 6 L6.5 2.1 L10.1 6 L8 6 L6.5 4.7 L5 6 Z M2.9 10 L6.5 13.9 L10.1 10 L8 10 L6.5 11.3 L5 10 Z" fill="#4d6185"/></svg></div></div><div class="t r" style="right:514px;top:219px">CRI:</div><div class="t" style="left:842px;top:219px;">&lt;=</div><div class="sp" style="left:863px;top:216px;width:67px"><div class="t" style="left:1px;top:1px;">34</div><div class="sb"><svg class="a" style="left:0;top:0" width="14" height="16" viewBox="0 0 14 16"><path d="M2.9 6 L6.5 2.1 L10.1 6 L8 6 L6.5 4.7 L5 6 Z M2.9 10 L6.5 13.9 L10.1 10 L8 10 L6.5 11.3 L5 10 Z" fill="#4d6185"/></svg></div></div><div class="t r" style="right:514px;top:248px">Ad:</div><div class="t" style="left:842px;top:248px;">&lt;=</div><div class="sp" style="left:863px;top:245px;width:67px"><div class="t" style="left:1px;top:1px;">15</div><div class="sb"><svg class="a" style="left:0;top:0" width="14" height="16" viewBox="0 0 14 16"><path d="M2.9 6 L6.5 2.1 L10.1 6 L8 6 L6.5 4.7 L5 6 Z M2.9 10 L6.5 13.9 L10.1 10 L8 10 L6.5 11.3 L5 10 Z" fill="#4d6185"/></svg></div></div><div class="t r" style="right:514px;top:277px">V:</div><div class="t" style="left:842px;top:277px;">&lt;=</div><div class="sp" style="left:863px;top:274px;width:67px"><div class="t" style="left:1px;top:1px;">25</div><div class="sb"><svg class="a" style="left:0;top:0" width="14" height="16" viewBox="0 0 14 16"><path d="M2.9 6 L6.5 2.1 L10.1 6 L8 6 L6.5 4.7 L5 6 Z M2.9 10 L6.5 13.9 L10.1 10 L8 10 L6.5 11.3 L5 10 Z" fill="#4d6185"/></svg></div></div><div class="t r" style="right:514px;top:306px">S:</div><div class="t" style="left:842px;top:306px;">&lt;=</div><div class="sp" style="left:863px;top:303px;width:67px"><div class="t" style="left:1px;top:1px;">1<span class="p">.</span>05</div><div class="sb"><svg class="a" style="left:0;top:0" width="14" height="16" viewBox="0 0 14 16"><path d="M2.9 6 L6.5 2.1 L10.1 6 L8 6 L6.5 4.7 L5 6 Z M2.9 10 L6.5 13.9 L10.1 10 L8 10 L6.5 11.3 L5 10 Z" fill="#4d6185"/></svg></div></div><div class="g" style="left:949px;top:82px;width:129px;height:254px"></div><div class="t bl" style="left:955px;top:75px;padding:0 2px">焦炭指标预测</div><div class="t r" style="right:361px;top:103px">M40:</div><div class="tb" style="left:1000px;top:100px;width:63px"><div class="t" style="left:2px;top:2px;">87<span class="p">.</span>64</div></div><div class="t r" style="right:361px;top:132px">M25:</div><div class="tb" style="left:1000px;top:129px;width:63px"><div class="t" style="left:2px;top:2px;">93<span class="p">.</span>11</div></div><div class="t r" style="right:361px;top:161px">M10:</div><div class="tb" style="left:1000px;top:158px;width:63px"><div class="t" style="left:2px;top:2px;">6<span class="p">.</span>13</div></div><div class="t r" style="right:361px;top:190px">CSR:</div><div class="tb" style="left:1000px;top:187px;width:63px"><div class="t" style="left:2px;top:2px;">60<span class="p">.</span>41</div></div><div class="t r" style="right:361px;top:219px">CRI:</div><div class="tb" style="left:1000px;top:216px;width:63px"><div class="t" style="left:2px;top:2px;">33</div></div><div class="t r" style="right:361px;top:248px">Ad:</div><div class="tb" style="left:1000px;top:245px;width:63px"><div class="t" style="left:2px;top:2px;">13<span class="p">.</span>48</div></div><div class="t r" style="right:361px;top:277px">V:</div><div class="tb" style="left:1000px;top:274px;width:63px"><div class="t" style="left:2px;top:2px;">0</div></div><div class="t r" style="right:357px;top:306px">S:</div><div class="tb" style="left:1000px;top:303px;width:63px"><div class="t" style="left:2px;top:2px;">0<span class="p">.</span>71</div></div><div class="g" style="left:1087px;top:82px;width:131px;height:253px"></div><div class="t bl" style="left:1093px;top:75px;padding:0 2px">入炉煤指标</div><div class="t r" style="right:224px;top:101px">Ad:</div><div class="tb" style="left:1137px;top:98px;width:63px"><div class="t" style="left:2px;top:2px;">10<span class="p">.</span>55</div></div><div class="t r" style="right:224px;top:130px">Vdaf:</div><div class="tb" style="left:1137px;top:127px;width:63px"><div class="t" style="left:2px;top:2px;">28<span class="p">.</span>30</div></div><div class="t r" style="right:224px;top:160px">Std:</div><div class="tb" style="left:1138px;top:157px;width:63px"><div class="t" style="left:2px;top:2px;">0<span class="p">.</span>86</div></div><div class="t r" style="right:224px;top:191px">G:</div><div class="tb" style="left:1137px;top:187px;width:63px"><div class="t" style="left:2px;top:2px;">76<span class="p">.</span>34</div></div><div class="t r" style="right:224px;top:218px">Y:</div><div class="tb" style="left:1137px;top:218px;width:63px"><div class="t" style="left:2px;top:2px;">14<span class="p">.</span>38</div></div><div class="t r" style="right:224px;top:252px">b:</div><div class="tb" style="left:1137px;top:246px;width:63px"><div class="t" style="left:2px;top:2px;">34<span class="p">.</span>80</div></div><div class="g" style="left:1225px;top:81px;width:156px;height:253px"></div><div class="t bl" style="left:1231px;top:74px;padding:0 2px">入炉煤预测</div><div class="t r" style="right:86px;top:100px">Ad:</div><div class="tb" style="left:1275px;top:97px;width:63px"><div class="t" style="left:2px;top:2px;">10<span class="p">.</span>29</div></div><div class="t r" style="right:86px;top:129px">Vdaf:</div><div class="tb" style="left:1275px;top:126px;width:63px"><div class="t" style="left:2px;top:2px;">27<span class="p">.</span>66</div></div><div class="t r" style="right:86px;top:159px">Std:</div><div class="tb" style="left:1276px;top:156px;width:63px"><div class="t" style="left:2px;top:2px;">0<span class="p">.</span>94</div></div><div class="t r" style="right:86px;top:189px">G:</div><div class="tb" style="left:1275px;top:186px;width:63px"><div class="t" style="left:2px;top:2px;">79<span class="p">.</span>64</div></div><div class="t r" style="right:86px;top:217px">Y:</div><div class="tb" style="left:1275px;top:217px;width:63px"><div class="t" style="left:2px;top:2px;">14<span class="p">.</span>26</div></div><div class="t r" style="right:86px;top:251px">b:</div><div class="tb" style="left:1275px;top:245px;width:63px"><div class="t" style="left:2px;top:2px;">-5<span class="p">.</span>27</div></div><div class="t" style="left:896px;top:368px;">配煤成本<span class="p">:</span></div><div class="tb" style="left:966px;top:363px;width:73px"><div class="t" style="left:2px;top:2px;">742<span class="p">.</span>54</div></div><div class="t" style="left:1084px;top:368px;">利润预测<span class="p">:</span></div><div class="tb" style="left:1153px;top:363px;width:73px"><div class="t" style="left:2px;top:2px;">129<span class="p">.</span>3</div></div><div class="g" style="left:798px;top:428px;width:170px;height:193px"></div><div class="t bl" style="left:804px;top:421px;padding:0 2px">价格指标</div><div class="t r" style="right:483px;top:451px">焦油<span class="p">:</span></div><div class="sp" style="left:876px;top:446px;width:71px"><div class="t" style="left:1px;top:1px;">1</div><div class="sb"><svg class="a" style="left:0;top:0" width="14" height="16" viewBox="0 0 14 16"><path d="M2.9 6 L6.5 2.1 L10.1 6 L8 6 L6.5 4.7 L5 6 Z M2.9 10 L6.5 13.9 L10.1 10 L8 10 L6.5 11.3 L5 10 Z" fill="#4d6185"/></svg></div></div><div class="t r" style="right:483px;top:478px">粗苯<span class="p">:</span></div><div class="sp" style="left:876px;top:473px;width:71px"><div class="t" style="left:1px;top:1px;">1</div><div class="sb"><svg class="a" style="left:0;top:0" width="14" height="16" viewBox="0 0 14 16"><path d="M2.9 6 L6.5 2.1 L10.1 6 L8 6 L6.5 4.7 L5 6 Z M2.9 10 L6.5 13.9 L10.1 10 L8 10 L6.5 11.3 L5 10 Z" fill="#4d6185"/></svg></div></div><div class="t r" style="right:483px;top:509px">硫铵<span class="p">:</span></div><div class="sp" style="left:876px;top:504px;width:71px"><div class="t" style="left:1px;top:1px;">1</div><div class="sb"><svg class="a" style="left:0;top:0" width="14" height="16" viewBox="0 0 14 16"><path d="M2.9 6 L6.5 2.1 L10.1 6 L8 6 L6.5 4.7 L5 6 Z M2.9 10 L6.5 13.9 L10.1 10 L8 10 L6.5 11.3 L5 10 Z" fill="#4d6185"/></svg></div></div><div class="t r" style="right:483px;top:539px">煤气<span class="p">:</span></div><div class="sp" style="left:876px;top:534px;width:71px"><div class="t" style="left:1px;top:1px;">1</div><div class="sb"><svg class="a" style="left:0;top:0" width="14" height="16" viewBox="0 0 14 16"><path d="M2.9 6 L6.5 2.1 L10.1 6 L8 6 L6.5 4.7 L5 6 Z M2.9 10 L6.5 13.9 L10.1 10 L8 10 L6.5 11.3 L5 10 Z" fill="#4d6185"/></svg></div></div><div class="t r" style="right:483px;top:567px">焦粉<span class="p">:</span></div><div class="sp" style="left:876px;top:562px;width:71px"><div class="t" style="left:1px;top:1px;">1</div><div class="sb"><svg class="a" style="left:0;top:0" width="14" height="16" viewBox="0 0 14 16"><path d="M2.9 6 L6.5 2.1 L10.1 6 L8 6 L6.5 4.7 L5 6 Z M2.9 10 L6.5 13.9 L10.1 10 L8 10 L6.5 11.3 L5 10 Z" fill="#4d6185"/></svg></div></div><div class="t r" style="right:483px;top:594px">电<span class="p">:</span></div><div class="sp" style="left:876px;top:589px;width:71px"><div class="t" style="left:1px;top:1px;">1</div><div class="sb"><svg class="a" style="left:0;top:0" width="14" height="16" viewBox="0 0 14 16"><path d="M2.9 6 L6.5 2.1 L10.1 6 L8 6 L6.5 4.7 L5 6 Z M2.9 10 L6.5 13.9 L10.1 10 L8 10 L6.5 11.3 L5 10 Z" fill="#4d6185"/></svg></div></div><div class="g" style="left:988px;top:428px;width:147px;height:295px"></div><div class="t bl" style="left:994px;top:421px;padding:0 2px">产量预测</div><div class="t r" style="right:313px;top:452px">电<span class="p">:</span></div><div class="tb" style="left:1046px;top:448px;width:63px"><div class="t" style="left:2px;top:2px;">0</div></div><div class="t r" style="right:313px;top:483px">焦油<span class="p">:</span></div><div class="tb" style="left:1047px;top:478px;width:63px"><div class="t" style="left:2px;top:2px;">3<span class="p">.</span>03</div></div><div class="t r" style="right:313px;top:514px">粗苯<span class="p">:</span></div><div class="tb" style="left:1046px;top:511px;width:63px"><div class="t" style="left:2px;top:2px;">0<span class="p">.</span>94</div></div><div class="t r" style="right:313px;top:546px">硫铵<span class="p">:</span></div><div class="tb" style="left:1047px;top:542px;width:63px"><div class="t" style="left:2px;top:2px;">0<span class="p">.</span>96</div></div><div class="t r" style="right:313px;top:577px">煤气<span class="p">:</span></div><div class="tb" style="left:1047px;top:573px;width:63px"><div class="t" style="left:2px;top:2px;">0</div></div><div class="t r" style="right:313px;top:607px">焦粉<span class="p">:</span></div><div class="tb" style="left:1046px;top:604px;width:63px"><div class="t" style="left:2px;top:2px;">0</div></div><div class="t r" style="right:313px;top:638px">焦碳<span class="p">:</span></div><div class="tb" style="left:1046px;top:634px;width:63px"><div class="t" style="left:2px;top:2px;">0</div></div><div class="t r" style="right:313px;top:668px">煤焦比<span class="p">:</span></div><div class="tb" style="left:1046px;top:665px;width:63px"><div class="t" style="left:2px;top:2px;">1<span class="p">.</span>35</div></div><div class="g" style="left:1144px;top:428px;width:154px;height:253px"></div><div class="t bl" style="left:1150px;top:421px;padding:0 2px">本次配煤比例</div><div class="t r" style="right:153px;top:451px">主焦<span class="p">:</span></div><div class="tb" style="left:1212px;top:446px;width:63px"><div class="t" style="left:2px;top:2px;">30</div></div><div class="t r" style="right:153px;top:483px">瘦焦<span class="p">:</span></div><div class="tb" style="left:1212px;top:479px;width:63px"><div class="t" style="left:2px;top:2px;">6</div></div><div class="t r" style="right:153px;top:513px">肥煤<span class="p">:</span></div><div class="tb" style="left:1212px;top:510px;width:63px"><div class="t" style="left:2px;top:2px;">12</div></div><div class="t r" style="right:153px;top:546px">1/3焦<span class="p">:</span></div><div class="tb" style="left:1212px;top:541px;width:63px"><div class="t" style="left:2px;top:2px;">25</div></div><div class="t r" style="right:158px;top:576px">瘦煤<span class="p">:</span></div><div class="tb" style="left:1212px;top:572px;width:63px"><div class="t" style="left:2px;top:2px;">5</div></div><div class="t r" style="right:153px;top:606px">弱粘煤<span class="p">:</span></div><div class="tb" style="left:1212px;top:602px;width:63px"><div class="t" style="left:2px;top:2px;">7</div></div><div class="t r" style="right:153px;top:637px">气煤<span class="p">:</span></div><div class="tb" style="left:1212px;top:633px;width:63px"><div class="t" style="left:2px;top:2px;">15</div></div>
<div class="a" style="left:1345px;top:28px;width:1px;height:44px;background:linear-gradient(to bottom,#7fa6ea,#5d8be0 30%,#4a74c8)"></div><div class="a" style="left:1345px;top:72px;width:1px;height:693px;background:#fbf5d6"></div><div id="rb" class="a"></div><div id="bb" class="a"></div>
<div class="a" style="left:1186px;top:737px;width:184px;height:24px;border:1px solid #a9c1e4;border-radius:4px;background:linear-gradient(to bottom,#ffffff 0,#ffffff 60%,#f2f6fc 100%)"></div>
<svg class="a" style="left:1176px;top:730px" width="174" height="36" viewBox="1176 730 174 36">
<defs><linearGradient id="so" x1="0" y1="0" x2="0" y2="1"><stop offset="0" stop-color="#f8702c"/><stop offset="1" stop-color="#ee4a12"/></linearGradient></defs>
<rect x="1183" y="735.8" width="24" height="24" rx="3" fill="url(#so)" transform="rotate(-16 1195 747.8)"/>
<path d="M1201.6 741.6 C1197 739.4 1189.2 740.6 1188.6 745 C1188.2 748.6 1194 748.4 1198.4 749.4 C1202.6 750.4 1201.6 754 1197.6 755 C1194 755.9 1190.2 755.4 1187.6 753.6" fill="none" stroke="#fff" stroke-width="3.6" stroke-linecap="round" transform="rotate(-8 1195 748)"/>
<!-- moon -->
<path d="M1247.6 743 C1252.6 746.4 1252.4 753.4 1246 755.4 C1243 756.2 1240 755.2 1238 753 C1243.6 753.6 1247.8 749 1247.6 743 Z" fill="#2272c8"/>
<!-- punctuation -->
<circle cx="1263.2" cy="746.4" r="1.9" fill="#2272c8"/>
<path d="M1268.4 749.6 C1270 750.4 1270.2 753.6 1267 754.6 C1268 753.2 1268.2 752 1267.4 750.8 Z" fill="#2272c8" stroke="#2272c8" stroke-width=".8"/>
<!-- keyboard -->
<rect x="1280" y="743" width="16" height="12" rx="1.8" fill="#2272c8"/>
<path d="M1282 745.7 h1.9 M1285 745.7 h1.9 M1288 745.7 h1.9 M1291 745.7 h3 M1282 748.8 h1.2 M1284.3 748.8 h1.9 M1287.3 748.8 h1.9 M1290.3 748.8 h1.9 M1293.2 748.8 h.9 M1282 751.9 h1.9 M1285 751.9 h9" stroke="#fff" stroke-width="1.7" fill="none"/>
<!-- person (grey) -->
<circle cx="1309.9" cy="745.3" r="3.2" fill="#b4c0d8"/>
<path d="M1304 752.6 C1304 749.8 1306 748.6 1309.9 748.6 C1313.8 748.6 1315.8 749.8 1315.8 752.6 L1314 753.4 L1314 756 L1305.8 756 L1305.8 753.4 Z" fill="#b4c0d8"/>
<rect x="1311.6" y="750.4" width="6.2" height="6" rx="1" fill="#fff" stroke="#c3cde0" stroke-width=".8"/>
<path d="M1313 752 h3.4 v1.4 h-3.4 v1.6 h3.4" fill="none" stroke="#b4c0d8" stroke-width="1.1"/>
<!-- t-shirt -->
<path d="M1328.6 742.6 L1331 742.4 C1331.6 744 1334.4 744 1335 742.4 L1337.4 742.6 L1340.2 746 L1337.6 748.2 L1336.4 747.2 L1336.4 755.6 L1329.6 755.6 L1329.6 747.2 L1328.4 748.2 L1325.8 746 Z" fill="#2272c8"/>
<!-- partially visible tool icon -->
<path d="M1347 753.6 L1350 749.6 L1350 755.6 L1347.4 755.6 Z" fill="#2272c8"/>
</svg>
<div class="t" style="-webkit-text-stroke:0;left:1214.5px;top:741.6px;height:16px;line-height:16px;transform:scaleX(1.07);transform-origin:0 0;font-family:'Liberation Sans','Noto Sans CJK SC',sans-serif;font-weight:bold;font-size:14.4px;color:#2272c8">中</div>

</body></html>
